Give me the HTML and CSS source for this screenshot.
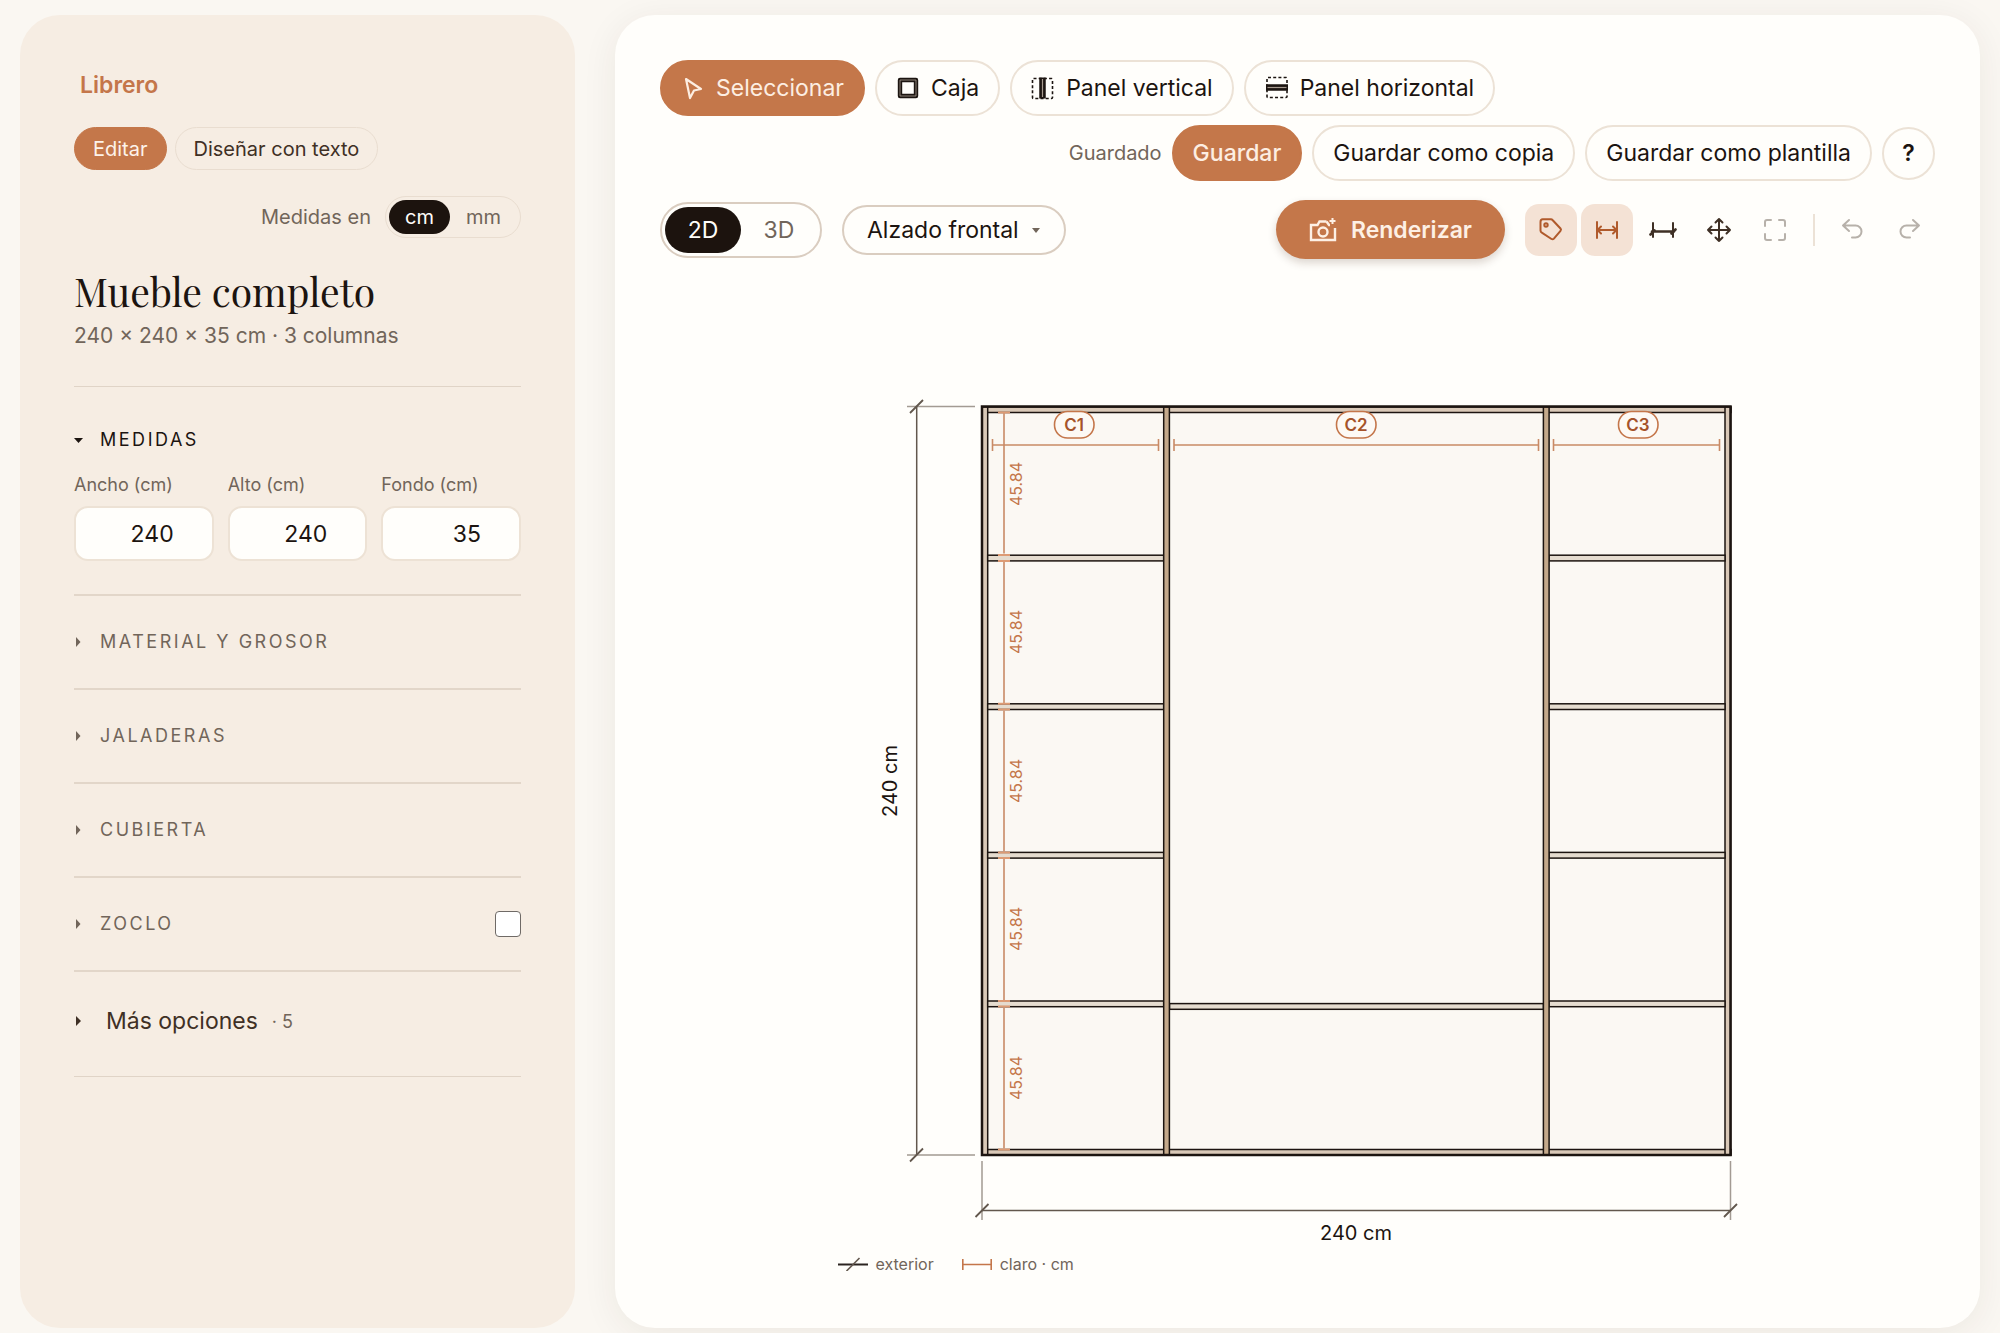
FILE: index.html
```html
<!DOCTYPE html>
<html lang="es">
<head>
<meta charset="utf-8">
<meta name="viewport" content="width=device-width, initial-scale=1">
<title>Librero</title>
<link rel="stylesheet" href="styles.css">
</head>
<body>
<div class="app">
  <aside class="sidebar">
    <a class="project" href="#">Librero</a>
    <div class="modes">
      <button class="chip chip-active" type="button">Editar</button>
      <button class="chip" type="button">Diseñar con texto</button>
    </div>
    <div class="units">
      <span>Medidas en</span>
      <div class="unit-toggle" role="group" aria-label="Medidas en">
        <button class="unit unit-active" type="button" aria-pressed="true">cm</button>
        <button class="unit" type="button" aria-pressed="false">mm</button>
      </div>
    </div>
    <h1 class="title">Mueble completo</h1>
    <p class="summary">240 × 240 × 35 cm · 3 columnas</p>

    <section class="measures">
      <button class="section-toggle section-open" type="button" aria-expanded="true">
        <svg class="caret" viewBox="0 0 10 10" aria-hidden="true"><path d="M0 3h9L4.500 8z"/></svg>Medidas
      </button>
      <div class="fields">
        <div class="field"><label for="ancho">Ancho (cm)</label><input id="ancho" type="text" inputmode="decimal" value="240"></div>
        <div class="field"><label for="alto">Alto (cm)</label><input id="alto" type="text" inputmode="decimal" value="240"></div>
        <div class="field"><label for="fondo">Fondo (cm)</label><input id="fondo" type="text" inputmode="decimal" value="35"></div>
      </div>
    </section>

    <div class="section">
      <button class="section-toggle" type="button" aria-expanded="false"><svg class="caret" viewBox="0 0 10 10" aria-hidden="true"><path d="M2 0v10l4.500-5z"/></svg>Material y grosor</button>
    </div>
    <div class="section">
      <button class="section-toggle" type="button" aria-expanded="false"><svg class="caret" viewBox="0 0 10 10" aria-hidden="true"><path d="M2 0v10l4.500-5z"/></svg>Jaladeras</button>
    </div>
    <div class="section">
      <button class="section-toggle" type="button" aria-expanded="false"><svg class="caret" viewBox="0 0 10 10" aria-hidden="true"><path d="M2 0v10l4.500-5z"/></svg>Cubierta</button>
    </div>
    <div class="section">
      <button class="section-toggle" type="button" aria-expanded="false"><svg class="caret" viewBox="0 0 10 10" aria-hidden="true"><path d="M2 0v10l4.500-5z"/></svg>Zoclo</button>
      <input class="check" type="checkbox" aria-label="Zoclo">
    </div>
    <div class="section section-more">
      <button class="more" type="button" aria-expanded="false"><svg class="caret" viewBox="0 0 10 10" aria-hidden="true"><path d="M2 0v10l5-5z"/></svg><span>Más opciones</span><span class="count">· 5</span></button>
    </div>
  </aside>

  <main class="workspace">
    <div class="row tools">
      <button class="pill pill-primary" type="button">
        <svg class="icon" viewBox="0 0 24 24" aria-hidden="true"><path d="M5 3l15 10-7 1.500-4 7.500z" fill="none" stroke="currentColor" stroke-width="2.200" stroke-linejoin="round"/></svg>Seleccionar
      </button>
      <button class="pill" type="button">
        <svg class="icon" viewBox="0 0 24 24" aria-hidden="true"><g fill="none"><path d="M4 4h16v16H4z" stroke="#1c1511" stroke-width="4.400" stroke-linejoin="round"/><path d="M4 4h16v16H4z" stroke="#a89c90" stroke-width="0.800"/></g></svg>Caja
      </button>
      <button class="pill" type="button">
        <svg class="icon" viewBox="0 0 24 24" aria-hidden="true"><g fill="none" stroke="#1c1511"><rect x="1.500" y="2.500" width="20" height="20" rx="1" stroke-width="1.600" stroke-dasharray="3 2.200"/><path d="M11.500 1.500v21" stroke-width="6.500"/><path d="M11.500 3v18" stroke="#a89c90" stroke-width="1.200"/></g></svg>Panel vertical
      </button>
      <button class="pill" type="button">
        <svg class="icon" viewBox="0 0 24 24" aria-hidden="true"><g fill="none" stroke="#1c1511"><rect x="2" y="1.500" width="20" height="20" rx="1" stroke-width="1.600" stroke-dasharray="3 2.200"/><path d="M1 11.500h22" stroke-width="6.500"/><path d="M2.500 11.500h19" stroke="#a89c90" stroke-width="1.200"/></g></svg>Panel horizontal
      </button>
    </div>

    <div class="row saving">
      <span class="status">Guardado</span>
      <button class="pill pill-primary pill-strong" type="button">Guardar</button>
      <button class="pill" type="button">Guardar como copia</button>
      <button class="pill" type="button">Guardar como plantilla</button>
      <button class="help" type="button" aria-label="Ayuda">?</button>
    </div>

    <div class="row view">
      <div class="view-toggle" role="group" aria-label="Vista">
        <button class="dim dim-active" type="button" aria-pressed="true">2D</button>
        <button class="dim" type="button" aria-pressed="false">3D</button>
      </div>
      <div class="select">
        <select aria-label="Proyección"><option>Alzado frontal</option></select>
        <svg class="caret" viewBox="0 0 10 10" aria-hidden="true"><path d="M1 3h8L5 8z"/></svg>
      </div>
      <button class="render" type="button">
        <svg class="icon-render" viewBox="0 0 28 26" aria-hidden="true"><g fill="none" stroke="currentColor" stroke-width="2.400"><path d="M17.500 4.500h-7L8.500 8H2v15h24v-12M17.500 4.500L20 8h1"/><circle cx="14" cy="15" r="4.500"/><path d="M23.500 1v6M20.500 4h6" stroke-width="2"/></g></svg>Renderizar
      </button>
      <div class="actions">
        <button class="act act-on" type="button" aria-label="Etiquetas" aria-pressed="true"><svg viewBox="0 0 28 28" aria-hidden="true"><path d="M3.500 6v8.500q0 1.500 1.300 2.200l9.700 6.300q1.300.8 2.400-.4l6.600-7.800q1-1.200 0-2.300L15.500 4q-.6-.7-1.500-.7H5.700q-2.200 0-2.200 2.700z"/><circle cx="9" cy="9" r="1.700"/></svg></button>
        <button class="act act-on" type="button" aria-label="Medidas interiores" aria-pressed="true"><svg viewBox="0 0 28 28" aria-hidden="true"><path d="M4 6v16M24 6v16M4.500 14h19M8 10.500L4.500 14 8 17.500M20 10.500l3.500 3.500-3.500 3.500"/></svg></button>
        <button class="act" type="button" aria-label="Medidas exteriores"><svg viewBox="0 0 28 28" aria-hidden="true"><path d="M4 7v14M24 7v14"/><path d="M1.500 18.500l4-4M22.500 17.500l4-4M3 15.500h22" stroke-width="2.600"/></svg></button>
        <button class="act" type="button" aria-label="Mover"><svg viewBox="0 0 28 28" aria-hidden="true"><path d="M14 3v22M3 14h22M10.500 6.500L14 3l3.500 3.500M10.500 21.500L14 25l3.500-3.500M6.500 10.500L3 14l3.500 3.500M21.500 10.500L25 14l-3.500 3.500"/></svg></button>
        <button class="act act-muted" type="button" aria-label="Ajustar a pantalla"><svg viewBox="0 0 28 28" aria-hidden="true"><path d="M4 10V6q0-2 2-2h4M18 4h4q2 0 2 2v4M24 18v4q0 2-2 2h-4M10 24H6q-2 0-2-2v-4"/></svg></button>
        <span class="divider"></span>
        <button class="act act-muted" type="button" aria-label="Deshacer"><svg viewBox="0 0 28 28" aria-hidden="true"><path d="M10 4L4 9.500l6 5.500M4 9.500h12.500a6 6 0 0 1 0 12H13"/></svg></button>
        <button class="act act-muted" type="button" aria-label="Rehacer"><svg viewBox="0 0 28 28" aria-hidden="true"><path d="M18 4l6 5.500-6 5.500M24 9.500H11.500a6 6 0 0 0 0 12H15"/></svg></button>
      </div>
    </div>

    <figure class="plan">
      <svg class="drawing" viewBox="838 390 920 860" role="img" aria-label="Alzado frontal, 240 × 240 cm">
        <rect class="cell" x="982" y="407" width="749" height="749"/>
        <g class="side">
          <rect x="982" y="407" width="749" height="5.500"/>
          <rect x="982" y="1149.500" width="749" height="5.500"/>
          <rect x="982" y="407" width="5.700" height="748"/>
          <rect x="1725" y="407" width="5.700" height="748"/>
        </g>
        <g class="shelf">
          <rect x="987.700" y="555.200" width="176" height="5.700"/>
          <rect x="987.700" y="703.800" width="176" height="5.700"/>
          <rect x="987.700" y="852.400" width="176" height="5.700"/>
          <rect x="987.700" y="1001" width="176" height="5.700"/>
          <rect x="1549" y="555.200" width="176" height="5.700"/>
          <rect x="1549" y="703.800" width="176" height="5.700"/>
          <rect x="1549" y="852.400" width="176" height="5.700"/>
          <rect x="1549" y="1001" width="176" height="5.700"/>
          <rect x="1169.500" y="1003.600" width="374" height="5.700"/>
        </g>
        <g class="post">
          <rect x="1163.700" y="407" width="5.700" height="748"/>
          <rect x="1543.400" y="407" width="5.700" height="748"/>
        </g>
        <rect class="frame" x="982" y="406.500" width="748.500" height="748.500"/>

        <path class="extension" d="M907 406.500h68M907 1155h68M982 1161v59M1730.500 1161v59"/>
        <path class="outer" d="M916.700 406.500v748.500M982 1210.500h748.500"/>
        <path class="tick" d="M910 413l13-13M910 1161.500l13-13M975.500 1217l13-13M1724 1217l13-13"/>
        <text class="total" x="1356" y="1240">240 cm</text>
        <text class="total" transform="translate(897 781) rotate(-90)">240 cm</text>

        <path class="inner" d="M992.500 445h166M1174 445h364M1553.500 445h166M992.500 439v12M1158.500 439v12M1174 439v12M1538.500 439v12M1553.500 439v12M1719.500 439v12"/>
        <path class="inner" d="M1004 412.500v141M1004 562v141M1004 710.500v141M1004 859v141M1004 1007.500v141"/>
        <path class="stop" d="M998 412.500h12M998 555h12M998 561h12M998 703.700h12M998 709.500h12M998 852.400h12M998 858h12M998 1001h12M998 1006.500h12M998 1149.500h12"/>
        <g class="gap">
          <text transform="translate(1022 484) rotate(-90)">45.84</text>
          <text transform="translate(1022 632) rotate(-90)">45.84</text>
          <text transform="translate(1022 781) rotate(-90)">45.84</text>
          <text transform="translate(1022 929) rotate(-90)">45.84</text>
          <text transform="translate(1022 1078) rotate(-90)">45.84</text>
        </g>
        <g class="badge">
          <rect x="1054.500" y="411.500" width="39.500" height="26.500" rx="13"/><text x="1074" y="431">C1</text>
          <rect x="1336.500" y="411.500" width="39.500" height="26.500" rx="13"/><text x="1356" y="431">C2</text>
          <rect x="1618.500" y="411.500" width="39.500" height="26.500" rx="13"/><text x="1638" y="431">C3</text>
        </g>
      </svg>
      <figcaption class="legend">
        <span class="key"><svg viewBox="0 0 30 14" aria-hidden="true"><path d="M0 7.500h30" stroke="#2b2420" stroke-width="2"/><path d="M8.500 14L21.500 1" stroke="#62574d" stroke-width="1.600"/></svg>exterior</span>
        <span class="key"><svg viewBox="0 0 30 14" aria-hidden="true"><path d="M0 7.500h30M.8 2v11M29.200 2v11" stroke="#c4764a" stroke-width="1.600"/></svg>claro · cm</span>
      </figcaption>
    </figure>
  </main>
</div>
</body>
</html>
```
FILE: styles.css
```css
* { box-sizing: border-box; }

body {
  margin: 0;
  background: #faf7f2;
  color: #1c1410;
  font-family: Inter, "Liberation Sans", sans-serif;
  font-size: 23px;
}

button, input, select {
  font: inherit;
  color: inherit;
  margin: 0;
}

button {
  padding: 0;
  border: 0;
  background: none;
  cursor: pointer;
  white-space: nowrap;
}

.app {
  display: grid;
  grid-template-columns: minmax(380px, 555px) minmax(0, 1fr);
  gap: 40px;
  min-height: 100vh;
  padding: 15px 20px 5px;
}

/* Sidebar */

.sidebar {
  display: flex;
  flex-direction: column;
  padding: 54px;
  border-radius: 40px;
  background: #f6ede3;
}

.project {
  align-self: flex-start;
  padding-left: 6px;
  color: #c4764a;
  font-size: 23px;
  font-weight: 600;
  line-height: 32px;
  text-decoration: none;
}

.modes {
  display: flex;
  gap: 8px;
  margin-top: 26px;
}

.chip {
  height: 43px;
  padding: 0 18px;
  border: 1px solid #e9ddd0;
  border-radius: 22px;
  color: #3f3025;
  font-size: 20px;
}

.chip-active {
  border-color: #c4774a;
  background: #c4774a;
  color: #fdf3ea;
}

.units {
  display: flex;
  justify-content: flex-end;
  align-items: center;
  gap: 14px;
  margin-top: 26px;
  color: #71655a;
  font-size: 20px;
}

.unit-toggle {
  display: flex;
  padding: 3px;
  border: 1px solid #e9ddd0;
  border-radius: 21px;
}

.unit {
  height: 34px;
  padding: 0 16px;
  border-radius: 17px;
}

.unit-active {
  background: #1c130e;
  color: #fffdf9;
}

.title {
  margin: 26px 0 0;
  font-family: "Playfair Display", "Liberation Serif", serif;
  font-size: 39px;
  font-weight: 400;
  line-height: 54px;
}

.summary {
  margin: 2px 0 0;
  color: #71655a;
  font-size: 21px;
  line-height: 32px;
}

.measures {
  margin-top: 34px;
  padding: 39px 0 33px;
  border-top: 1px solid #e0d4c7;
}

.section-toggle {
  display: flex;
  align-items: center;
  gap: 16px;
  color: #71655a;
  font-size: 18px;
  letter-spacing: 0.14em;
  line-height: 28px;
  text-transform: uppercase;
}

.section-open { color: #1c1410; }

.caret {
  flex: none;
  width: 10px;
  height: 10px;
  fill: currentColor;
}

.fields {
  display: grid;
  grid-template-columns: repeat(3, minmax(0, 1fr));
  gap: 14px;
  margin-top: 19px;
}

.field {
  display: flex;
  flex-direction: column;
  gap: 9px;
}

.field label {
  color: #71655a;
  font-size: 18px;
  line-height: 24px;
}

.field input {
  width: 100%;
  height: 55px;
  padding: 0 38px 0 12px;
  border: 2px solid #ede2d5;
  border-radius: 14px;
  background: #fffefb;
  text-align: right;
}

.section {
  display: flex;
  justify-content: space-between;
  align-items: center;
  height: 94px;
  border-top: 2px solid #e2d6c9;
}

.section-more {
  height: 107px;
  padding-bottom: 6px;
  border-bottom: 1px solid #e0d4c7;
}

.check {
  appearance: none;
  width: 26px;
  height: 26px;
  border: 1px solid #6f6a66;
  border-radius: 4px;
  background: #fff;
}

.more {
  display: flex;
  align-items: center;
  gap: 14px;
  color: #3f3025;
}

.more span:first-of-type { margin-left: 8px; }

.count {
  color: #71655a;
  font-size: 18px;
}

/* Workspace */

.workspace {
  padding: 45px;
  border-radius: 40px;
  background: #fffefb;
  box-shadow: 0 6px 36px rgb(60 40 20 / 7%);
}

.row {
  display: flex;
  flex-wrap: wrap;
  align-items: center;
  gap: 10px;
}

.pill {
  display: flex;
  align-items: center;
  gap: 11px;
  height: 56px;
  padding: 0 19px;
  border: 2px solid #ece2d6;
  border-radius: 28px;
}

.pill-primary {
  border-color: #c4774a;
  background: #c4774a;
  color: #fdeee2;
}

.pill-strong { font-weight: 500; }

.icon {
  width: 24px;
  height: 24px;
}

.saving {
  justify-content: flex-end;
  margin-top: 9px;
}

.status {
  color: #71655a;
  font-size: 20px;
}

.help {
  width: 53px;
  height: 53px;
  border: 2px solid #ece2d6;
  border-radius: 50%;
  font-weight: 600;
}

.view {
  gap: 20px;
  margin-top: 19px;
}

.view-toggle {
  display: flex;
  padding: 3px;
  border: 2px solid #dacdc0;
  border-radius: 28px;
}

.dim {
  width: 76px;
  height: 46px;
  border-radius: 23px;
  color: #71655a;
}

.dim-active {
  background: #1c130e;
  color: #fffdf9;
}

.select {
  display: grid;
  align-items: center;
  color: #71655a;
}

.select > * { grid-area: 1 / 1; }

.select select {
  height: 50px;
  padding: 0 45px 0 23px;
  appearance: none;
  border: 2px solid #dacdc0;
  border-radius: 25px;
  background: none;
  color: #1c1410;
}

.select .caret {
  justify-self: end;
  margin-right: 25px;
  pointer-events: none;
}

.render {
  display: flex;
  align-items: center;
  gap: 14px;
  height: 59px;
  margin-left: auto;
  padding: 0 33px;
  border-radius: 30px;
  background: #c4774a;
  box-shadow: 0 4px 8px rgb(60 30 10 / 18%);
  color: #fdf0e5;
  font-weight: 600;
}

.icon-render {
  width: 28px;
  height: 26px;
}

.actions {
  display: flex;
  align-items: center;
  gap: 4px;
}

.act {
  display: grid;
  place-items: center;
  width: 52px;
  height: 52px;
  border-radius: 14px;
  color: #3f3025;
}

.act svg {
  width: 28px;
  height: 28px;
  fill: none;
  stroke: currentColor;
  stroke-width: 2;
  stroke-linecap: round;
  stroke-linejoin: round;
}

.act-on {
  background: #f4e2d5;
  color: #b05a2c;
}

.act-muted { color: #b7b1aa; }

.divider {
  width: 2px;
  height: 32px;
  margin: 0 8px;
  background: #ece2d6;
}

/* Elevation drawing */

.plan {
  max-width: 920px;
  margin: 131px auto 0;
}

.drawing {
  display: block;
  width: 100%;
}

.cell { fill: #fbf8f3; }

.side rect { fill: #d9c8b7; }
.post rect { fill: #c4a98b; }
.shelf rect { fill: #e5dccf; }

.side rect, .shelf rect, .post rect {
  stroke: #1c1410;
  stroke-width: 1.5px;
}

.frame {
  fill: none;
  stroke: #1c1410;
  stroke-width: 2.5px;
}

.extension { stroke: #a39b93; stroke-width: 1.5px; }
.outer { stroke: #62574d; stroke-width: 1.5px; }
.tick { stroke: #62574d; stroke-width: 1.8px; }
.inner { stroke: #c98a66; stroke-width: 1.6px; }
.stop { stroke: #dd9b74; stroke-width: 2px; }

.total {
  fill: #1c1410;
  font-size: 20px;
  text-anchor: middle;
}

.gap text {
  fill: #c4764a;
  font-size: 16px;
  text-anchor: middle;
}

.badge rect {
  fill: #fdf9f4;
  stroke: #c4764a;
  stroke-width: 1.6px;
}

.badge text {
  fill: #a5532a;
  font-size: 17px;
  font-weight: 600;
  text-anchor: middle;
}

.legend {
  display: flex;
  gap: 28px;
  margin-top: 2px;
  color: #71655a;
  font-size: 16px;
  line-height: 24px;
}

.key {
  display: flex;
  align-items: center;
  gap: 8px;
}

.key svg {
  width: 30px;
  height: 14px;
  fill: none;
}
```
